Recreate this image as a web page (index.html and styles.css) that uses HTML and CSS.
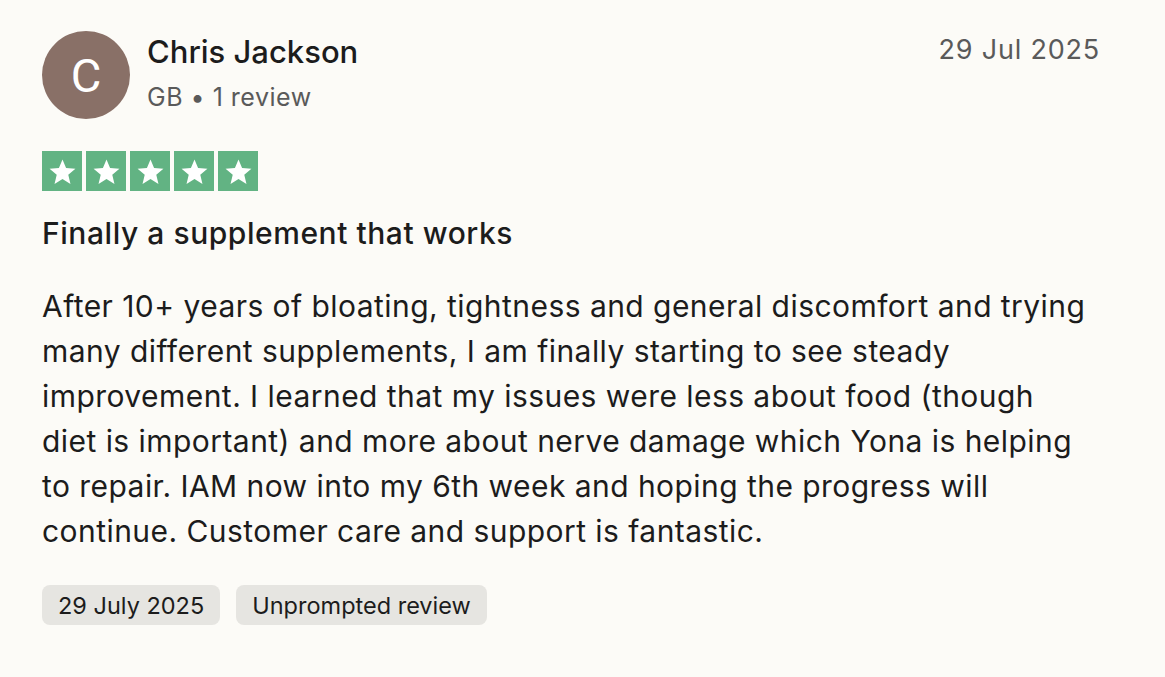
FILE: index.html
```html
<!DOCTYPE html>
<html lang="en">
<head>
<meta charset="utf-8">
<link rel="stylesheet" href="styles.css">
</head>
<body>
<article class="review">
  <header class="review-header">
    <div class="consumer">
      <div class="avatar">C</div>
      <div class="consumer-info">
        <div class="name">Chris Jackson</div>
        <div class="meta">GB • 1 review</div>
      </div>
    </div>
    <time class="date">29 Jul 2025</time>
  </header>
  <div class="stars">
    <span class="star"><svg viewBox="0 0 24 24"><path d="M12 3.2l2.6 6.3 6.8.5-5.2 4.4 1.6 6.6L12 17.4 6.2 21l1.6-6.6L2.6 10l6.8-.5z" fill="#fff"/></svg></span>
    <span class="star"><svg viewBox="0 0 24 24"><path d="M12 3.2l2.6 6.3 6.8.5-5.2 4.4 1.6 6.6L12 17.4 6.2 21l1.6-6.6L2.6 10l6.8-.5z" fill="#fff"/></svg></span>
    <span class="star"><svg viewBox="0 0 24 24"><path d="M12 3.2l2.6 6.3 6.8.5-5.2 4.4 1.6 6.6L12 17.4 6.2 21l1.6-6.6L2.6 10l6.8-.5z" fill="#fff"/></svg></span>
    <span class="star"><svg viewBox="0 0 24 24"><path d="M12 3.2l2.6 6.3 6.8.5-5.2 4.4 1.6 6.6L12 17.4 6.2 21l1.6-6.6L2.6 10l6.8-.5z" fill="#fff"/></svg></span>
    <span class="star"><svg viewBox="0 0 24 24"><path d="M12 3.2l2.6 6.3 6.8.5-5.2 4.4 1.6 6.6L12 17.4 6.2 21l1.6-6.6L2.6 10l6.8-.5z" fill="#fff"/></svg></span>
  </div>
  <h2 class="title">Finally a supplement that works</h2>
  <p class="body">After 10+ years of bloating, tightness and general discomfort and trying many different supplements, I am finally starting to see steady improvement. I learned that my issues were less about food (though diet is important) and more about nerve damage which Yona is helping to repair. IAM now into my 6th week and hoping the progress will continue. Customer care and support is fantastic.</p>
  <div class="tags">
    <span class="tag">29 July 2025</span>
    <span class="tag">Unprompted review</span>
  </div>
</article>
</body>
</html>
```
FILE: styles.css
```css
html, body {
  margin: 0;
  padding: 0;
  background: #fcfbf7;
}
body {
  font-family: Inter, "Noto Sans", sans-serif;
  color: #1c1c1c;
}
.review {
  width: 1058px;
  padding: 31px 0 0 42px;
}
.review-header {
  display: flex;
  justify-content: space-between;
  align-items: flex-start;
}
.consumer {
  display: flex;
  align-items: center;
  gap: 17px;
}
.avatar {
  width: 88px;
  height: 88px;
  border-radius: 50%;
  background: #897067;
  color: #fff;
  font-family: Roboto, sans-serif;
  font-size: 47px;
  display: flex;
  align-items: center;
  justify-content: center;
}
.consumer-info {
  display: flex;
  flex-direction: column;
  gap: 11px;
  margin-top: -4px;
}
.name {
  font-size: 31px;
  font-weight: 500;
  line-height: 36px;
  color: #1c1c1c;
}
.meta {
  font-size: 25px;
  letter-spacing: 0.5px;
  line-height: 32px;
  color: #5a5a5a;
}
.date {
  font-size: 27px;
  letter-spacing: 0.8px;
  line-height: 34px;
  color: #5a5a5a;
  margin-top: 2px;
}
.stars {
  display: flex;
  gap: 4px;
  margin-top: 32px;
}
.star {
  width: 40px;
  height: 40px;
  background: #62b383;
  display: flex;
  align-items: center;
  justify-content: center;
}
.star svg {
  width: 33px;
  height: 33px;
}
.title {
  margin: 23px 0 0;
  font-size: 30px;
  font-weight: 500;
  letter-spacing: 0.55px;
  line-height: 38px;
  color: #1c1c1c;
}
.body {
  margin: 32px 8px 0 0;
  font-size: 30px;
  letter-spacing: 0.45px;
  line-height: 45px;
  color: #1c1c1c;
}
.tags {
  display: flex;
  gap: 16px;
  margin-top: 31px;
}
.tag {
  background: #e6e5e1;
  border-radius: 8px;
  padding: 0 16px;
  height: 40px;
  display: flex;
  align-items: center;
  font-size: 23.5px;
  color: #1c1c1c;
}
```
